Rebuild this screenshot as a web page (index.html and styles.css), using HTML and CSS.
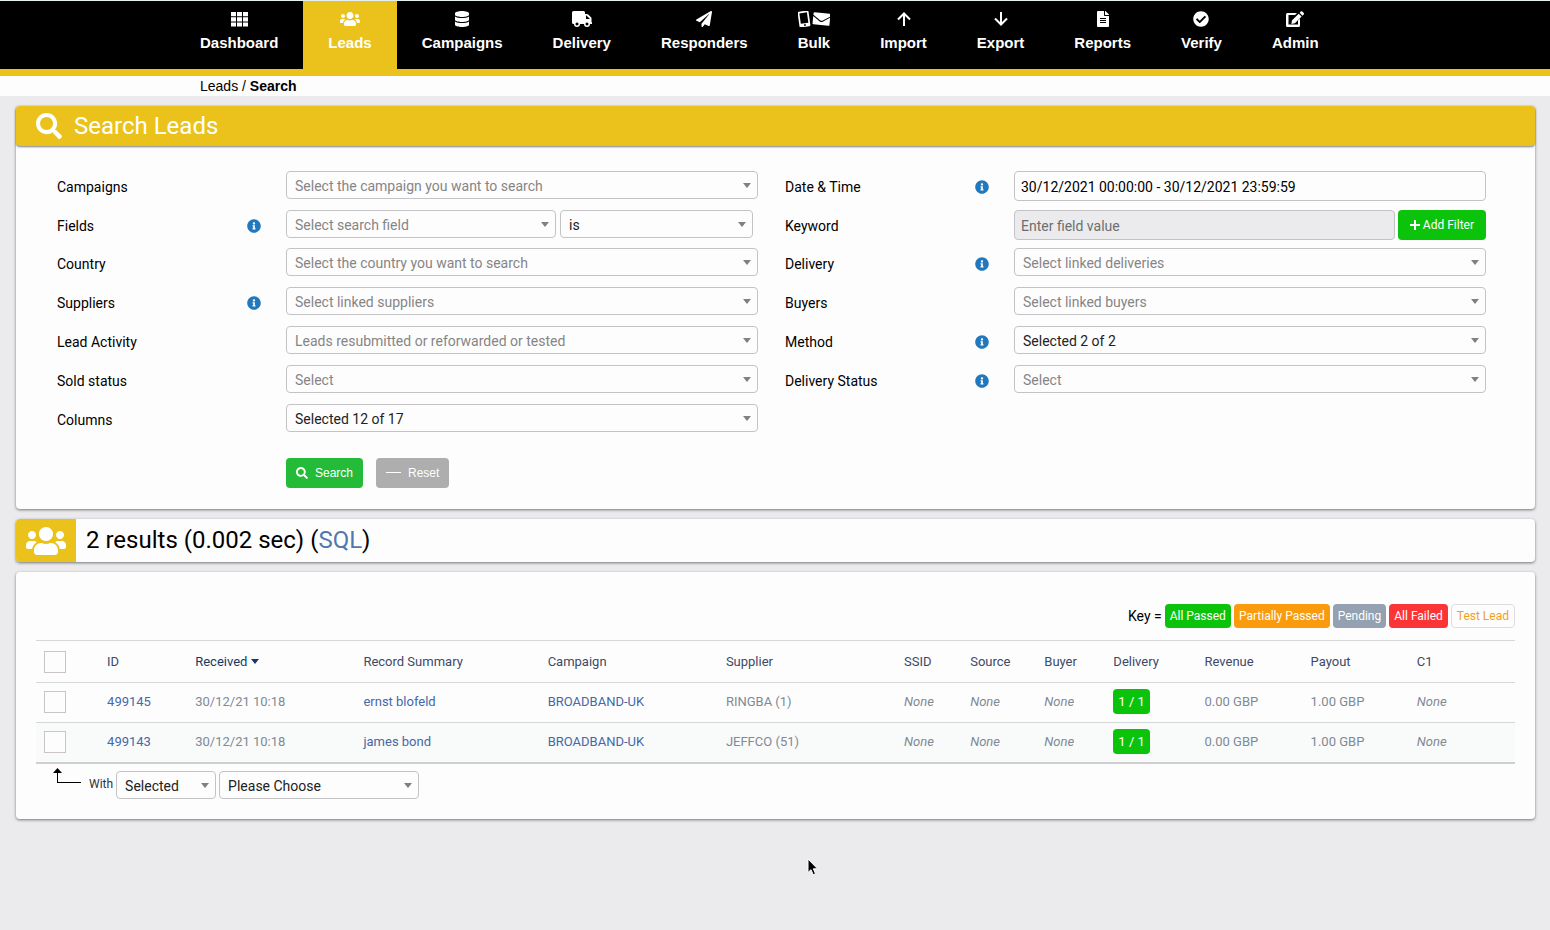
FILE: index.html
```html
<!DOCTYPE html>
<html lang="en">
<head>
    <meta charset="UTF-8">
    <meta name="viewport" content="width=device-width, initial-scale=1.0">
    <title>Leads / Search</title>
    <link rel="stylesheet" href="styles.css">
</head>
<body>
    <!-- icons used more than once -->
    <svg class="sprite" aria-hidden="true">
        <symbol id="icon-users" viewBox="0 0 640 512"><path d="M96 224c35.300 0 64-28.700 64-64s-28.700-64-64-64-64 28.700-64 64 28.700 64 64 64zm448 0c35.300 0 64-28.700 64-64s-28.700-64-64-64-64 28.700-64 64 28.700 64 64 64zm32 32h-64c-17.600 0-33.500 7.100-45.100 18.600 40.300 22.100 68.900 62 75.100 109.400h66c17.700 0 32-14.300 32-32v-32c0-35.300-28.700-64-64-64zm-256 0c61.900 0 112-50.100 112-112S381.900 32 320 32 208 82.100 208 144s50.100 112 112 112zm76.800 32h-8.300c-20.800 10-43.900 16-68.500 16s-47.600-6-68.500-16h-8.300C179.600 288 128 339.600 128 403.200V432c0 26.500 21.500 48 48 48h288c26.500 0 48-21.500 48-48v-28.800c0-63.600-51.600-115.200-115.200-115.200zm-223.700-13.400C161.500 263.100 145.600 256 128 256H64c-35.300 0-64 28.700-64 64v32c0 17.700 14.300 32 32 32h65.900c6.300-47.400 34.900-87.300 75.200-109.400z"/></symbol>
        <symbol id="icon-search" viewBox="0 0 512 512"><path d="M505 442.700L405.300 343c-4.500-4.500-10.600-7-17-7H372c27.600-35.300 44-79.700 44-128C416 93.100 322.900 0 208 0S0 93.100 0 208s93.100 208 208 208c48.300 0 92.700-16.400 128-44v16.300c0 6.400 2.500 12.500 7 17l99.700 99.700c9.400 9.400 24.600 9.400 33.900 0l28.300-28.300c9.400-9.400 9.400-24.600.1-34zM208 336c-70.700 0-128-57.200-128-128 0-70.700 57.200-128 128-128 70.700 0 128 57.200 128 128 0 70.700-57.200 128-128 128z"/></symbol>
        <symbol id="icon-info" viewBox="0 0 512 512"><path d="M256 8C119 8 8 119 8 256s111 248 248 248 248-111 248-248S393 8 256 8zm0 110c23.200 0 42 18.800 42 42s-18.800 42-42 42-42-18.800-42-42 18.800-42 42-42zm56 254c0 6.600-5.400 12-12 12h-88c-6.600 0-12-5.400-12-12v-24c0-6.600 5.400-12 12-12h12v-64h-12c-6.600 0-12-5.400-12-12v-24c0-6.600 5.400-12 12-12h64c6.600 0 12 5.400 12 12v100h12c6.600 0 12 5.400 12 12v24z"/></symbol>
    </svg>

    <nav class="navbar">
        <a href="#" class="nav-item">
            <svg class="icon" viewBox="0 0 17 16"><path d="M0 1h5v4.200H0zM6 1h5v4.200H6zM12 1h5v4.200h-5zM0 6.200h5v4.200H0zM6 6.200h5v4.200H6zM12 6.200h5v4.200h-5zM0 11.400h5v4H0zM6 11.400h5v4H6zM12 11.400h5v4h-5z"/></svg>
            Dashboard
        </a>
        <a href="#" class="nav-item active">
            <svg class="icon" viewBox="0 0 640 512"><use href="#icon-users"/></svg>
            Leads
        </a>
        <a href="#" class="nav-item">
            <svg class="icon" viewBox="0 0 448 512"><path d="M448 73v46c0 40-100 73-224 73S0 159 0 119V73C0 33 100 0 224 0s224 33 224 73zM448 176v103c0 40-100 73-224 73S0 319 0 279V176c48 33 136 48.600 224 48.600S400 209 448 176zm0 160v103c0 40-100 73-224 73S0 479 0 439V336c48 33 136 48.600 224 48.600S400 369 448 336z"/></svg>
            Campaigns
        </a>
        <a href="#" class="nav-item">
            <svg class="icon" viewBox="0 0 20 16"><path fill-rule="evenodd" d="M1.500 0h10q1.500 0 1.500 1.500V3h2q.7 0 1.200.5l2.800 2.800q.5.500.5 1.200V11q.5 0 .5.500v1q0 .5-.5.500H18a3 3 0 0 1-6 0H8a3 3 0 0 1-6 0h-.5Q0 13 0 11.500v-10Q0 0 1.500 0zM14 4.500V8h4l-3.500-3.500zM5 11.500a1.500 1.500 0 1 0 .01 0zM15 11.500a1.500 1.500 0 1 0 .01 0z"/></svg>
            Delivery
        </a>
        <a href="#" class="nav-item">
            <svg class="icon" viewBox="0 0 512 512"><path d="M476 3.200L12.500 270.600c-18.100 10.400-15.800 35.600 2.200 43.200L121 358.400l287.300-253.200c5.500-4.900 13.300 2.600 8.600 8.300L176 407v80.500c0 23.600 28.500 32.900 42.500 15.800L282 426l124.600 52.200c14.200 6 30.400-2.900 33-18.200l72-432C515 7.800 493.300-6.800 476 3.200z"/></svg>
            Responders
        </a>
        <a href="#" class="nav-item">
            <svg class="icon" viewBox="0 0 32 16">
                <g transform="rotate(-8 6 8)"><path fill-rule="evenodd" d="M2 0h8q1.500 0 1.500 1.500v13q0 1.500-1.500 1.500H2Q.5 16 .5 14.500v-13Q.5 0 2 0zM2.200 1.800v10.400h7.600V1.800zM6 13.200a.9.900 0 1 0 .01 0z"/></g>
                <g transform="rotate(6 23 8)"><path d="M16 2h15q1 0 1 1v1.500l-7.500 5q-1 .6-2 0L15 4.500V3q0-1 1-1zM15 5.700l7 4.800q1.500.8 3 0l7-4.800V13q0 1-1 1H16q-1 0-1-1z"/></g>
            </svg>
            Bulk
        </a>
        <a href="#" class="nav-item">
            <svg class="icon line" viewBox="0 0 16 16"><path d="M8 15V2.500M2 8.500L8 2.500L14 8.500"/></svg>
            Import
        </a>
        <a href="#" class="nav-item">
            <svg class="icon line" viewBox="0 0 16 16"><path d="M8 1v12.500M2 7.500L8 13.500L14 7.500"/></svg>
            Export
        </a>
        <a href="#" class="nav-item">
            <svg class="icon" viewBox="0 0 384 512"><path d="M224 136V0H24C10.700 0 0 10.700 0 24v464c0 13.300 10.700 24 24 24h336c13.300 0 24-10.700 24-24V160H248c-13.200 0-24-10.800-24-24zm64 248H96v-32h192zm0-64H96v-32h192zm0-64H96v-32h192zm96-134v6H256V0h6c6.400 0 12.500 2.500 17 7l98 98c4.500 4.500 7 10.600 7 17z"/></svg>
            Reports
        </a>
        <a href="#" class="nav-item">
            <svg class="icon" viewBox="0 0 512 512"><path d="M504 256c0 137-111 248-248 248S8 393 8 256 119 8 256 8s248 111 248 248zM227.300 387.300l184-184c6.200-6.200 6.200-16.400 0-22.600l-22.600-22.600c-6.200-6.200-16.400-6.200-22.600 0L216 308.100l-70-70c-6.200-6.200-16.400-6.200-22.600 0l-22.600 22.600c-6.200 6.200-6.200 16.400 0 22.600l104 104c6.200 6.200 16.400 6.200 22.500 0z"/></svg>
            Verify
        </a>
        <a href="#" class="nav-item">
            <svg class="icon" viewBox="0 0 18 16"><path d="M1.500 2H11L9 4H2.500v9.500H12v-4l2-2v7q0 1.500-1.500 1.500h-11Q0 16 0 14.500v-11Q0 2 1.500 2z"/><path d="M12.700 2.700l2.900 2.900-6.700 6.700-3.500.6.500-3.400zM13.600 1.800L14.800.6q.8-.8 1.600 0l1.300 1.300q.8.800 0 1.600l-1.200 1.200z"/></svg>
            Admin
        </a>
    </nav>

    <div class="breadcrumb"><a href="#">Leads</a> / <strong>Search</strong></div>

    <main class="content">
        <section class="panel">
            <h1 class="panel-title">
                <svg class="title-icon"><use href="#icon-search"/></svg>
                Search Leads
            </h1>
            <form class="search-form">
                <div class="columns">
                    <div class="column">
                        <div class="form-row">
                            <label for="campaigns">Campaigns</label>
                            <div class="field">
                                <span class="select"><select id="campaigns" class="placeholder"><option>Select the campaign you want to search</option></select></span>
                            </div>
                        </div>
                        <div class="form-row filter-row">
                            <label for="fields">Fields</label>
                            <svg class="info"><use href="#icon-info"/></svg>
                            <div class="field with-operator">
                                <span class="select"><select id="fields" class="placeholder"><option>Select search field</option></select></span>
                                <span class="select operator"><select aria-label="Operator"><option>is</option></select></span>
                            </div>
                        </div>
                        <div class="form-row">
                            <label for="country">Country</label>
                            <div class="field">
                                <span class="select"><select id="country" class="placeholder"><option>Select the country you want to search</option></select></span>
                            </div>
                        </div>
                        <div class="form-row">
                            <label for="suppliers">Suppliers</label>
                            <svg class="info"><use href="#icon-info"/></svg>
                            <div class="field">
                                <span class="select"><select id="suppliers" class="placeholder"><option>Select linked suppliers</option></select></span>
                            </div>
                        </div>
                        <div class="form-row">
                            <label for="activity">Lead Activity</label>
                            <div class="field">
                                <span class="select"><select id="activity" class="placeholder"><option>Leads resubmitted or reforwarded or tested</option></select></span>
                            </div>
                        </div>
                        <div class="form-row">
                            <label for="sold">Sold status</label>
                            <div class="field">
                                <span class="select"><select id="sold" class="placeholder"><option>Select</option></select></span>
                            </div>
                        </div>
                        <div class="form-row">
                            <label for="cols">Columns</label>
                            <div class="field">
                                <span class="select"><select id="cols"><option>Selected 12 of 17</option></select></span>
                            </div>
                        </div>
                    </div>

                    <div class="column">
                        <div class="form-row">
                            <label for="datetime">Date &amp; Time</label>
                            <svg class="info"><use href="#icon-info"/></svg>
                            <div class="field">
                                <input type="text" id="datetime" value="30/12/2021 00:00:00 - 30/12/2021 23:59:59">
                            </div>
                        </div>
                        <div class="form-row filter-row">
                            <label for="keyword">Keyword</label>
                            <div class="field with-button">
                                <input type="text" id="keyword" placeholder="Enter field value" disabled>
                                <button type="button" class="btn btn-add">
                                    <svg viewBox="0 0 10 10"><path d="M4 0h2v4h4v2H6v4H4V6H0V4h4z"/></svg>
                                    Add Filter
                                </button>
                            </div>
                        </div>
                        <div class="form-row">
                            <label for="delivery">Delivery</label>
                            <svg class="info"><use href="#icon-info"/></svg>
                            <div class="field">
                                <span class="select"><select id="delivery" class="placeholder"><option>Select linked deliveries</option></select></span>
                            </div>
                        </div>
                        <div class="form-row">
                            <label for="buyers">Buyers</label>
                            <div class="field">
                                <span class="select"><select id="buyers" class="placeholder"><option>Select linked buyers</option></select></span>
                            </div>
                        </div>
                        <div class="form-row">
                            <label for="method">Method</label>
                            <svg class="info"><use href="#icon-info"/></svg>
                            <div class="field">
                                <span class="select"><select id="method"><option>Selected 2 of 2</option></select></span>
                            </div>
                        </div>
                        <div class="form-row">
                            <label for="delivery-status">Delivery Status</label>
                            <svg class="info"><use href="#icon-info"/></svg>
                            <div class="field">
                                <span class="select"><select id="delivery-status" class="placeholder"><option>Select</option></select></span>
                            </div>
                        </div>
                    </div>
                </div>

                <div class="actions">
                    <button type="submit" class="btn btn-search">
                        <svg><use href="#icon-search"/></svg>
                        Search
                    </button>
                    <button type="reset" class="btn btn-reset">
                        <svg viewBox="0 0 15 12"><path d="M0 5h15v1H0z"/></svg>
                        Reset
                    </button>
                </div>
            </form>
        </section>

        <section class="panel results-bar">
            <span class="results-icon"><svg><use href="#icon-users"/></svg></span>
            <h2>2 results (0.002 sec) (<a href="#">SQL</a>)</h2>
        </section>

        <section class="panel results">
            <div class="key">
                <span class="key-label">Key =</span>
                <span class="badge passed">All Passed</span>
                <span class="badge partial">Partially Passed</span>
                <span class="badge pending">Pending</span>
                <span class="badge failed">All Failed</span>
                <span class="badge test">Test Lead</span>
            </div>

            <table class="leads">
                <colgroup>
                    <col class="col-check">
                    <col class="col-id">
                    <col class="col-received">
                    <col class="col-summary">
                    <col class="col-campaign">
                    <col class="col-supplier">
                    <col class="col-ssid">
                    <col class="col-source">
                    <col class="col-buyer">
                    <col class="col-delivery">
                    <col class="col-money">
                    <col class="col-money">
                    <col class="col-money">
                </colgroup>
                <thead>
                    <tr>
                        <th><input type="checkbox" aria-label="Select all leads"></th>
                        <th>ID</th>
                        <th class="sorted">Received</th>
                        <th>Record Summary</th>
                        <th>Campaign</th>
                        <th>Supplier</th>
                        <th>SSID</th>
                        <th>Source</th>
                        <th>Buyer</th>
                        <th>Delivery</th>
                        <th>Revenue</th>
                        <th>Payout</th>
                        <th>C1</th>
                    </tr>
                </thead>
                <tbody>
                    <tr>
                        <td><input type="checkbox" aria-label="Select lead 499145"></td>
                        <td><a href="#">499145</a></td>
                        <td>30/12/21 10:18</td>
                        <td><a href="#">ernst blofeld</a></td>
                        <td><a href="#">BROADBAND-UK</a></td>
                        <td>RINGBA (1)</td>
                        <td><em>None</em></td>
                        <td><em>None</em></td>
                        <td><em>None</em></td>
                        <td><span class="count">1 / 1</span></td>
                        <td>0.00 GBP</td>
                        <td>1.00 GBP</td>
                        <td><em>None</em></td>
                    </tr>
                    <tr>
                        <td><input type="checkbox" aria-label="Select lead 499143"></td>
                        <td><a href="#">499143</a></td>
                        <td>30/12/21 10:18</td>
                        <td><a href="#">james bond</a></td>
                        <td><a href="#">BROADBAND-UK</a></td>
                        <td>JEFFCO (51)</td>
                        <td><em>None</em></td>
                        <td><em>None</em></td>
                        <td><em>None</em></td>
                        <td><span class="count">1 / 1</span></td>
                        <td>0.00 GBP</td>
                        <td>1.00 GBP</td>
                        <td><em>None</em></td>
                    </tr>
                </tbody>
            </table>

            <div class="bulk-actions">
                <svg class="bulk-arrow" viewBox="0 0 30 16"><path d="M5.500 0L10 5H1z"/><path d="M5 4h1v10h23v1H5z"/></svg>
                <label for="bulk-scope">With</label>
                <span class="select scope"><select id="bulk-scope"><option>Selected</option></select></span>
                <span class="select action"><select aria-label="Action"><option>Please Choose</option></select></span>
            </div>
        </section>
    </main>

    <svg class="cursor" viewBox="0 0 12 18"><path d="M1 1v13.500l3-2.800 2.200 5 2.300-1-2.200-4.900h4.200z"/></svg>
</body>
</html>
```
FILE: styles.css
```css
* {
    box-sizing: border-box;
}

body {
    margin: 0;
    background: #ebebed;
    color: #000;
    font-family: Roboto, "Liberation Sans", sans-serif;
    font-size: 14px;
}

a {
    color: #4468a9;
    text-decoration: none;
}

svg {
    flex: none;
    fill: currentColor;
}

.sprite {
    display: none;
}

/* top navigation */
.navbar {
    display: flex;
    padding-left: 175px;
    background: #000;
    border-top: 1px solid #e6f0ee;
    border-bottom: 7px solid #ebc21b;
}

.nav-item {
    display: flex;
    flex-direction: column;
    align-items: center;
    gap: 6px;
    height: 68px;
    padding: 10px 25px 0;
    color: #fff;
    font: bold 15px/20px "Liberation Sans", sans-serif;
}

.nav-item.active {
    background: #ebc21b;
}

.nav-item .icon {
    height: 16px;
}

.nav-item .line {
    fill: none;
    stroke: currentColor;
    stroke-width: 2;
}

.breadcrumb {
    padding-left: 200px;
    background: #fefdfe;
    font: 14px/20px "Liberation Sans", sans-serif;
}

.breadcrumb a {
    color: #000;
}

/* panels */
.content {
    display: flex;
    flex-direction: column;
    gap: 10px;
    padding: 10px 15px 40px 16px;
}

.panel {
    background: #fefdfe;
    border-radius: 4px;
    box-shadow: 0 1px 3px rgba(0, 0, 0, 0.5);
}

.panel-title {
    display: flex;
    align-items: center;
    gap: 12px;
    height: 40px;
    margin: 0;
    padding: 0 20px;
    background: #ebc21b;
    border-radius: 4px;
    box-shadow: 0 1px 2px rgba(0, 0, 0, 0.5);
    color: #fff;
    font-size: 24px;
    font-weight: 400;
}

.title-icon {
    width: 26px;
    height: 26px;
}

/* search form */
.search-form {
    padding: 25px 49px 21px 41px;
}

.columns {
    display: grid;
    grid-template-columns: 1fr 1fr;
    gap: 27px;
}

.form-row {
    display: flex;
    height: 30px;
    margin-bottom: 9px;
}

.filter-row {
    margin-bottom: 8px;
}

.form-row label {
    width: 190px;
    line-height: 32px;
}

.info {
    width: 14px;
    height: 14px;
    margin-top: 9px;
    color: #2278bd;
}

.field {
    display: flex;
    flex: 1;
    margin-left: 39px;
}

.info + .field {
    margin-left: 25px;
}

.with-operator {
    gap: 4px;
    padding-right: 5px;
}

.with-button {
    gap: 3px;
}

.select {
    display: block;
    position: relative;
    flex: 1;
    height: 28px;
}

.select::after {
    content: "";
    position: absolute;
    top: 12px;
    right: 7px;
    border: 4px solid transparent;
    border-top: 5px solid #808080;
    border-bottom: 0;
    pointer-events: none;
}

.operator {
    flex: 0 1 193px;
}

select {
    appearance: none;
    width: 100%;
    height: 28px;
    padding: 2px 20px 0 8px;
    background: #fefdfe;
    border: 1px solid #c3c3c6;
    border-radius: 4px;
    color: #222;
    font: 14px/20px Roboto, "Liberation Sans", sans-serif;
}

select.placeholder {
    color: #858585;
}

input[type="text"] {
    flex: 1;
    min-width: 0;
    height: 30px;
    padding: 2px 6px 0;
    background: #fefdfe;
    border: 1px solid #c3c3c6;
    border-radius: 4px;
    color: #000;
    font: 14px/20px Roboto, "Liberation Sans", sans-serif;
}

input[type="text"]:disabled {
    background: #ebebed;
}

input::placeholder {
    color: #6e6e70;
}

.btn {
    display: flex;
    align-items: center;
    height: 30px;
    padding: 0 10px;
    border: 0;
    border-radius: 4px;
    color: #fff;
    font: 12px/20px "Liberation Sans", sans-serif;
    white-space: nowrap;
    cursor: pointer;
}

.btn-add {
    gap: 3px;
    padding: 0 12px;
    background: #0cc30c;
    font-family: Roboto, "Liberation Sans", sans-serif;
}

.btn-add svg {
    width: 10px;
    height: 10px;
}

.actions {
    display: flex;
    gap: 13px;
    padding: 15px 0 0 229px;
}

.btn-search {
    gap: 7px;
    background: #24bb38;
}

.btn-search svg {
    width: 12px;
    height: 12px;
}

.btn-reset {
    gap: 7px;
    background: #aeaeae;
}

.btn-reset svg {
    width: 15px;
    height: 12px;
}

/* result count */
.results-bar {
    display: flex;
    align-items: center;
    gap: 10px;
    height: 43px;
}

.results-icon {
    display: flex;
    align-items: center;
    justify-content: center;
    width: 60px;
    height: 100%;
    background: #ebc21b;
    border-radius: 4px 0 0 4px;
    color: #fff;
}

.results-icon svg {
    width: 40px;
    height: 32px;
}

.results-bar h2 {
    margin: 0;
    padding-bottom: 2px;
    font-size: 24px;
    font-weight: 400;
}

.results-bar a {
    color: #5078ad;
}

/* results table */
.results {
    padding: 32px 20px 20px;
}

.key {
    display: flex;
    align-items: center;
    justify-content: flex-end;
    gap: 3px;
    margin-bottom: 12px;
}

.badge {
    padding: 0 5px;
    border-radius: 4px;
    color: #fff;
    font-size: 12px;
    line-height: 24px;
}

.passed {
    background: #0cc30c;
}

.partial {
    background: #f99b0c;
}

.pending {
    background: #93a1b0;
}

.failed {
    background: #fb3535;
}

.test {
    border: 1px solid #dddde0;
    color: #f0a020;
    line-height: 22px;
}

.leads {
    width: 100%;
    table-layout: fixed;
    border-collapse: separate;
    border-spacing: 0;
    border-bottom: 2px solid #cfcfd2;
    color: #7e8a94;
    font-size: 13px;
}

.col-check { width: 63px; }
.col-id { width: 88px; }
.col-received { width: 168px; }
.col-summary { width: 184px; }
.col-campaign, .col-supplier { width: 178px; }
.col-ssid { width: 66px; }
.col-source { width: 74px; }
.col-buyer { width: 69px; }
.col-delivery { width: 91px; }
.col-money { width: 106px; }

.leads th, .leads td {
    height: 40px;
    padding: 0 8px;
    border-top: 1px solid #d5d8da;
    text-align: left;
    white-space: nowrap;
}

.leads th {
    height: 42px;
    color: #3c4a66;
    font-weight: 400;
}

.leads td {
    padding-bottom: 2px;
}

.leads th.sorted {
    color: #163a66;
}

.sorted::after {
    content: "";
    display: inline-block;
    margin-left: 4px;
    border: 4px solid transparent;
    border-top: 5px solid #163a66;
    border-bottom: 0;
    vertical-align: 2px;
}

.leads tbody tr:nth-child(even) {
    background: #f9fafa;
}

.leads input {
    appearance: none;
    display: block;
    width: 22px;
    height: 22px;
    margin: 0;
    background: #fefdfe;
    border: 1px solid #c9c5c5;
}

.count {
    display: inline-block;
    padding: 0 5px;
    background: #0cc30c;
    border-radius: 4px;
    color: #fff;
    line-height: 25px;
}

.bulk-actions {
    display: flex;
    align-items: flex-start;
    gap: 3px;
    padding: 7px 0 0 16px;
}

.bulk-arrow {
    width: 30px;
    height: 16px;
    margin-top: -3px;
}

.bulk-actions label {
    margin-left: 4px;
    color: #333;
    font-size: 12px;
    line-height: 26px;
}

.scope {
    flex: 0 1 100px;
}

.action {
    flex: 0 1 200px;
}

/* mouse pointer over the page */
.cursor {
    position: absolute;
    top: 858px;
    left: 807px;
    width: 12px;
    height: 18px;
    stroke: #fff;
    pointer-events: none;
}
```
